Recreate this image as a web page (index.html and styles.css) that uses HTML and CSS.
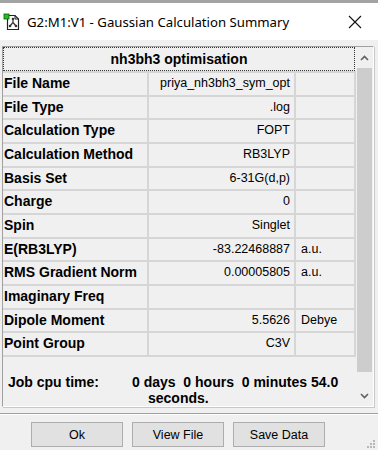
FILE: index.html
```html
<!DOCTYPE html>
<html lang="en">
<head>
    <meta charset="UTF-8">
    <title>G2:M1:V1 - Gaussian Calculation Summary</title>
    <link rel="stylesheet" href="styles.css">
</head>
<body>
    <!-- window frame behind -->
    <div class="top-strip"></div>

    <!-- title bar -->
    <div class="title-bar">
        <svg class="app-icon" width="18" height="18" viewBox="0 0 18 18">
            <path d="M4.5 2.5 H12 L15.5 6 V16.5 H4.5 Z" fill="#fff" stroke="#222" stroke-width="1.2"/>
            <path d="M12 2.5 V6 H15.5" fill="none" stroke="#222" stroke-width="1"/>
            <path d="M10 6 V9.5 L7 13 M10 9.5 L13 13" fill="none" stroke="#333" stroke-width="1.2"/>
            <circle cx="7" cy="13" r="1.3" fill="#333"/>
            <circle cx="13" cy="13" r="1.3" fill="#333"/>
            <circle cx="10" cy="6" r="1.3" fill="#333"/>
            <rect x="1" y="1" width="5" height="5" fill="#1ec21e" stroke="#0a5a0a" stroke-width="0.8"/>
        </svg>
        <span class="title-text">G2:M1:V1 - Gaussian Calculation Summary</span>
        <svg class="close-icon" width="14" height="14" viewBox="0 0 14 14">
            <path d="M1 1 L13 13 M13 1 L1 13" stroke="#111" stroke-width="1.1"/>
        </svg>
    </div>

    <div class="dialog">
        <div class="summary-frame">
            <div class="summary-list">
                <div class="summary-head">nh3bh3 optimisation</div>

                <div class="summary-row">
                    <div class="cell-label">File Name</div>
                    <div class="cell-value">priya_nh3bh3_sym_opt</div>
                    <div class="cell-unit"></div>
                </div>
                <div class="summary-row">
                    <div class="cell-label">File Type</div>
                    <div class="cell-value">.log</div>
                    <div class="cell-unit"></div>
                </div>
                <div class="summary-row">
                    <div class="cell-label">Calculation Type</div>
                    <div class="cell-value">FOPT</div>
                    <div class="cell-unit"></div>
                </div>
                <div class="summary-row">
                    <div class="cell-label">Calculation Method</div>
                    <div class="cell-value">RB3LYP</div>
                    <div class="cell-unit"></div>
                </div>
                <div class="summary-row">
                    <div class="cell-label">Basis Set</div>
                    <div class="cell-value">6-31G(d,p)</div>
                    <div class="cell-unit"></div>
                </div>
                <div class="summary-row">
                    <div class="cell-label">Charge</div>
                    <div class="cell-value">0</div>
                    <div class="cell-unit"></div>
                </div>
                <div class="summary-row">
                    <div class="cell-label">Spin</div>
                    <div class="cell-value">Singlet</div>
                    <div class="cell-unit"></div>
                </div>
                <div class="summary-row">
                    <div class="cell-label">E(RB3LYP)</div>
                    <div class="cell-value">-83.22468887</div>
                    <div class="cell-unit">a.u.</div>
                </div>
                <div class="summary-row">
                    <div class="cell-label">RMS Gradient Norm</div>
                    <div class="cell-value">0.00005805</div>
                    <div class="cell-unit">a.u.</div>
                </div>
                <div class="summary-row">
                    <div class="cell-label">Imaginary Freq</div>
                    <div class="cell-value"></div>
                    <div class="cell-unit"></div>
                </div>
                <div class="summary-row">
                    <div class="cell-label">Dipole Moment</div>
                    <div class="cell-value">5.5626</div>
                    <div class="cell-unit">Debye</div>
                </div>
                <div class="summary-row">
                    <div class="cell-label">Point Group</div>
                    <div class="cell-value">C3V</div>
                    <div class="cell-unit"></div>
                </div>

                <div class="cpu-time">
                    <div class="cpu-label">Job cpu time:</div>
                    <div class="cpu-value">
                        <div>0 days&nbsp; 0 hours&nbsp; 0 minutes 54.0</div>
                        <div class="cpu-wrap">seconds.</div>
                    </div>
                </div>
            </div>

            <!-- scrollbar -->
            <div class="scrollbar">
                <div class="scroll-btn">
                    <svg width="9" height="6" viewBox="0 0 9 6"><path d="M1 5 L4.5 1.5 L8 5" fill="none" stroke="#606060" stroke-width="1.6"/></svg>
                </div>
                <div class="scroll-thumb"></div>
                <div class="scroll-btn">
                    <svg width="9" height="6" viewBox="0 0 9 6"><path d="M1 1 L4.5 4.5 L8 1" fill="none" stroke="#606060" stroke-width="1.6"/></svg>
                </div>
            </div>
        </div>

        <div class="separator"></div>

        <div class="button-row">
            <button type="button" class="dlg-btn">Ok</button>
            <button type="button" class="dlg-btn">View File</button>
            <button type="button" class="dlg-btn">Save Data</button>
        </div>

        <svg class="grip" width="10" height="10" viewBox="0 0 10 10">
            <rect x="7" y="1" width="2" height="2" fill="#b8b8b8"/>
            <rect x="4" y="4" width="2" height="2" fill="#b8b8b8"/>
            <rect x="7" y="4" width="2" height="2" fill="#b8b8b8"/>
            <rect x="1" y="7" width="2" height="2" fill="#b8b8b8"/>
            <rect x="4" y="7" width="2" height="2" fill="#b8b8b8"/>
            <rect x="7" y="7" width="2" height="2" fill="#b8b8b8"/>
        </svg>
    </div>
</body>
</html>
```

FILE: styles.css
```css
body {
    margin: 0;
    width: 378px;
    height: 450px;
    overflow: hidden;
    background-color: #f0f0f0;
    font-family: "Liberation Sans", Arial, sans-serif;
    color: #000;
}

/* 뒤쪽 창 테두리 */
.top-strip {
    height: 3px;
    background-color: #a3a3a3;
}

/* 제목 표시줄 */
.title-bar {
    height: 37px;
    background-color: #fff;
    display: flex;
    align-items: center;
    padding-left: 3px;
    box-sizing: border-box;
}

.app-icon {
    flex: none;
    margin-top: 1px;
}

.title-text {
    margin-left: 6px;
    font-family: "Noto Sans", "Open Sans", sans-serif;
    font-size: 13.2px;
    color: #000;
    flex: 1;
}

.close-icon {
    margin-right: 16px;
    margin-top: 1px;
}

/* 대화상자 본문 */
.dialog {
    position: relative;
    height: 410px;
    padding: 6px 4px 0 2px;
    box-sizing: border-box;
}

.summary-frame {
    display: flex;
    height: 359px;
    border: 1px solid;
    border-color: #a0a0a0 #fff #fff #a0a0a0;
    box-shadow: 1px 1px 0 #c8c8c8;
}

.summary-list {
    flex: 1;
    display: flex;
    flex-direction: column;
}

.summary-head {
    height: 24px;
    line-height: 22px;
    text-align: center;
    font-weight: bold;
    font-size: 14px;
    border: 1px dotted #333;
    box-sizing: border-box;
    margin-right: 1px;
}

.summary-row {
    display: grid;
    grid-template-columns: 146px 147px 1fr;
    height: 23.7px;
    border-top: 2px solid #d6d6d6;
    box-sizing: border-box;
}

.cell-label,
.cell-value,
.cell-unit {
    line-height: 21px;
    white-space: nowrap;
}

.cell-label {
    padding-left: 1px;
    font-weight: bold;
    font-size: 14px;
    border-right: 2px solid #d6d6d6;
}

.cell-value {
    text-align: right;
    padding-right: 4px;
    font-size: 12.5px;
    border-right: 2px solid #d6d6d6;
}

.cell-unit {
    padding-left: 5px;
    font-size: 12.5px;
    border-right: 2px solid #d6d6d6;
}

/* 작업 시간 */
.cpu-time {
    flex: 1;
    display: flex;
    border-top: 2px solid #d6d6d6;
    padding-top: 17px;
    font-weight: bold;
    font-size: 14px;
    line-height: 16px;
}

.cpu-label {
    width: 124px;
    padding-left: 5px;
}

.cpu-wrap {
    padding-left: 16px;
}

/* 스크롤바 */
.scrollbar {
    width: 17px;
    display: flex;
    flex-direction: column;
    background-color: #f0f0f0;
}

.scroll-btn {
    height: 21px;
    display: flex;
    align-items: center;
    justify-content: center;
}

.scroll-thumb {
    flex: 1;
    margin: 0 1px 13px;
    background-color: #cdcdcd;
}

/* 구분선 */
.separator {
    margin-top: 6px;
    margin-left: -2px;
    margin-right: -4px;
    border-top: 1px solid #a0a0a0;
    border-bottom: 1px solid #fff;
}

/* 버튼 */
.button-row {
    display: flex;
    gap: 9px;
    padding-left: 29px;
    margin-top: 7px;
}

.dlg-btn {
    width: 92px;
    height: 25px;
    background-color: #e1e1e1;
    border: 1px solid #adadad;
    font-family: "Liberation Sans", Arial, sans-serif;
    font-size: 12.5px;
    color: #000;
    padding: 0;
}

.grip {
    position: absolute;
    right: 2px;
    bottom: 1px;
}
```
